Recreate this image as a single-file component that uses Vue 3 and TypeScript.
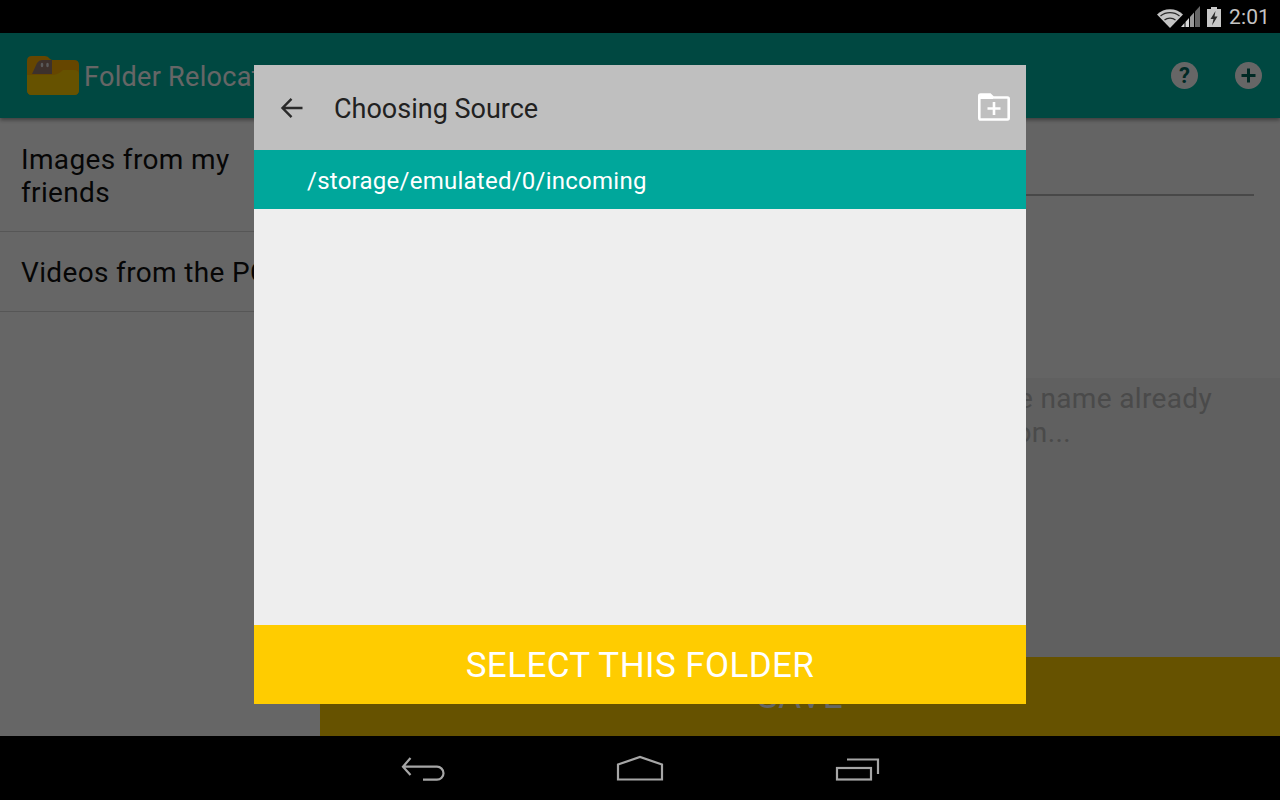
<script setup lang="ts">
const rules = [
  { id: 1, name: 'Images from my friends' },
  { id: 2, name: 'Videos from the PC' },
]
</script>

<template>
  <div class="screen">
    <div class="status">
      <svg class="wifi" width="26" height="22" viewBox="0 0 26 22">
        <path d="M0 7.500 C7 0.500 19 0.500 26 7.500 L13 21 Z" fill="#c4c4c4" />
        <path d="M3.500 9 C9 4.600 17 4.600 22.500 9" fill="none" stroke="#2a2a2a" stroke-width="1.300" />
        <path d="M7.500 13 C10.500 10.500 15.500 10.500 18.500 13" fill="none" stroke="#2a2a2a" stroke-width="1.300" />
      </svg>
      <svg class="signal" width="19" height="22" viewBox="0 0 19 22">
        <path d="M0 21 L3.500 17 V21 Z" fill="#d8d8d8" />
        <path d="M4.500 21 V16 L8 12 V21 Z" fill="#d8d8d8" />
        <path d="M9 21 V11 L13 6.500 V21 Z" fill="#9a9a9a" />
        <path d="M14 21 V5.500 L19 0 V21 Z" fill="#666" />
      </svg>
      <svg class="battery" width="14" height="22" viewBox="0 0 14 22">
        <path d="M4 1 H10 V3 H14 V21 H0 V3 H4 Z" fill="#c8c8c8" />
        <path d="M8.500 5 L3.500 13 H6.500 L5 19.500 L10.500 10.500 H7.500 Z" fill="#2a2a2a" />
      </svg>
      <span class="clock">2:01</span>
    </div>

    <div class="content">
      <header class="appbar">
        <svg class="logo" width="52" height="39" viewBox="0 0 52 39">
          <path d="M5 0 H18 Q21 0 23 3 Q24 4 26 4 H47 Q52 4 52 9 V34 Q52 39 47 39 H5 Q0 39 0 34 V5 Q0 0 5 0 Z" fill="#ffb000" />
          <path d="M0 34 V19 H24 Q32 19 36 14 H47 Q52 14 52 19 V34 Q52 39 47 39 H5 Q0 39 0 34 Z" fill="#ffcc00" />
          <path d="M5 18 L10 7 Q12 4 15 4 H25 V18 Z" fill="#9a7a6e" />
          <ellipse cx="15" cy="9" rx="1.300" ry="2.300" fill="#e0e0e0" />
          <ellipse cx="20.500" cy="9" rx="1.300" ry="2.300" fill="#e0e0e0" />
        </svg>
        <h1 class="app-title">Folder Relocator</h1>
        <div class="actions">
          <span class="round">?</span>
          <span class="round">
            <svg width="27" height="27" viewBox="0 0 27 27">
              <path d="M13.500 6.500 V20.500 M6.500 13.500 H20.500" stroke="#00695c" stroke-width="3" />
            </svg>
          </span>
        </div>
      </header>

      <div class="main">
        <ul class="rules">
          <li v-for="rule in rules" :key="rule.id" class="rule">{{ rule.name }}</li>
        </ul>
        <section class="form">
          <div class="name-field">
            <div class="input-line"></div>
          </div>
          <div class="conflict">
            <p class="hint">Select what should be done when a file with the same name already<br />exists at the destination and choose the desired action...</p>
          </div>
          <button class="save">SAVE</button>
        </section>
      </div>

      <div class="scrim"></div>

      <div class="dialog">
        <div class="dialog-head">
          <svg class="back" width="24" height="24" viewBox="0 0 24 24">
            <path d="M22.500 12 H2.500 M11.500 2.800 L2.500 12 L11.500 21.200" fill="none" stroke="#2a2a2a" stroke-width="2.400" />
          </svg>
          <span class="dialog-title">Choosing Source</span>
          <svg class="new-folder" width="32" height="28" viewBox="0 0 32 28">
            <path d="M2.500 1.500 H12 L15 4.500 H29.500 Q30.700 4.500 30.700 6 V25 Q30.700 26.500 29.500 26.500 H2.500 Q1.300 26.500 1.300 25 V3 Q1.300 1.500 2.500 1.500 Z" fill="none" stroke="#fff" stroke-width="2.600" />
            <path d="M2.500 1.500 H12 L15 4.500 V6 H1.500 Z" fill="#fff" />
            <path d="M16 9 V22 M9.500 15.500 H22.500" stroke="#fff" stroke-width="2.600" />
          </svg>
        </div>
        <div class="path">/storage/emulated/0/incoming</div>
        <div class="folders"></div>
        <button class="select">SELECT THIS FOLDER</button>
      </div>
    </div>

    <nav class="navbar">
      <svg width="46" height="26" viewBox="0 0 46 26">
        <path d="M10.500 3 L3 11.700 L10.500 20 M3 11.700 H37 A6.500 6.500 0 0 1 37 24.700 H23" fill="none" stroke="#a6a6a6" stroke-width="2.200" />
      </svg>
      <svg width="48" height="26" viewBox="0 0 48 26">
        <path d="M2 24.500 V9.500 L24 2 L46 9.500 V24.500 Z" fill="none" stroke="#a6a6a6" stroke-width="2.200" />
      </svg>
      <svg width="46" height="26" viewBox="0 0 46 26">
        <rect x="3" y="13" width="34" height="11.500" fill="none" stroke="#a6a6a6" stroke-width="2.200" />
        <path d="M13 4.500 H44 V19" fill="none" stroke="#a6a6a6" stroke-width="2.200" />
      </svg>
    </nav>
  </div>
</template>

<style>
html,
body {
  margin: 0;
  background: #000;
}
</style>

<style scoped>
.screen {
  width: 1280px;
  height: 800px;
  display: flex;
  flex-direction: column;
  overflow: hidden;
  font-family: Roboto, "Liberation Sans", sans-serif;
}

.status {
  height: 33px;
  flex: none;
  background: #000;
  display: flex;
  align-items: center;
  justify-content: flex-end;
  padding-right: 10px;
  box-sizing: border-box;
}
.wifi {
  margin-right: -2px;
  margin-top: 3px;
}
.signal {
  margin-right: 7px;
  margin-top: 1px;
}
.battery {
  margin-right: 8px;
  margin-top: 1px;
}
.clock {
  color: #c4c4c4;
  font-size: 21px;
  letter-spacing: 0.1px;
  line-height: 33px;
  padding-top: 2px;
}

.content {
  flex: 1;
  position: relative;
  display: flex;
  flex-direction: column;
  min-height: 0;
}

.appbar {
  height: 85px;
  flex: none;
  background: #00b5a3;
  display: flex;
  align-items: center;
  padding-left: 27px;
  box-sizing: border-box;
  box-shadow: 0 2px 4px rgba(0, 0, 0, 0.4);
  position: relative;
  z-index: 1;
}
.app-title {
  margin: 3px 0 0 5px;
  font-size: 27px;
  font-weight: 400;
  letter-spacing: 0.3px;
  color: #fff;
  white-space: nowrap;
}
.actions {
  margin-left: auto;
  display: flex;
  gap: 37px;
  padding-right: 18px;
  margin-top: -1px;
}
.round {
  width: 27px;
  height: 27px;
  border-radius: 50%;
  background: #fff;
  color: #00695c;
  font-size: 22px;
  font-weight: 700;
  line-height: 27px;
  text-align: center;
  display: block;
}
.round svg {
  display: block;
}

.main {
  flex: 1;
  display: flex;
  min-height: 0;
}
.rules {
  width: 320px;
  flex: none;
  margin: 0;
  padding: 0;
  list-style: none;
  background: #ffffff;
}
.rule {
  padding: 25px 90px 22px 21px;
  font-size: 28px;
  letter-spacing: 0.35px;
  line-height: 33px;
  color: #111;
  border-bottom: 1px solid #d8d8d8;
}
.rule:last-child {
  padding-top: 24px;
  white-space: nowrap;
}
.form {
  flex: 1;
  display: flex;
  flex-direction: column;
  background: #fafafa;
}
.name-field {
  height: 260px;
  flex: none;
  box-sizing: border-box;
  padding: 76px 26px 0 30px;
}
.input-line {
  height: 2px;
  background: #b4b4b4;
}
.conflict {
  flex: 1;
  background: #f0f0f0;
  padding: 4px 0 0 30px;
}
.hint {
  margin: 0;
  font-size: 28px;
  letter-spacing: 0.35px;
  line-height: 34px;
  color: #b8b8b8;
  white-space: nowrap;
}
.save {
  height: 79px;
  flex: none;
  border: 0;
  background: #ffcc00;
  color: #fff;
  font: 400 35px Roboto, "Liberation Sans", sans-serif;
  letter-spacing: 0.4px;
  padding: 0;
}

.scrim {
  position: absolute;
  inset: 0;
  z-index: 2;
  background: rgba(0, 0, 0, 0.6);
}

.dialog {
  position: absolute;
  left: 254px;
  top: 32px;
  width: 772px;
  height: 639px;
  z-index: 3;
  display: flex;
  flex-direction: column;
  background: #eeeeee;
}
.dialog-head {
  height: 85px;
  flex: none;
  background: #bfbfbf;
  display: flex;
  align-items: center;
  padding: 0 16px 0 26px;
}
.back {
  flex: none;
}
.dialog-title {
  margin-left: 30px;
  margin-top: 2px;
  font-size: 27px;
  color: #212121;
}
.new-folder {
  margin-left: auto;
  margin-top: -2px;
}
.path {
  height: 59px;
  flex: none;
  background: #00a79b;
  color: #fff;
  font-size: 24px;
  letter-spacing: 0.25px;
  line-height: 62px;
  padding-left: 53px;
}
.folders {
  flex: 1;
}
.select {
  height: 79px;
  flex: none;
  border: 0;
  padding: 2px 0 0;
  background: #ffcc00;
  color: #fff;
  font: 400 35px Roboto, "Liberation Sans", sans-serif;
  letter-spacing: 0.4px;
}

.navbar {
  height: 64px;
  flex: none;
  background: #000;
  display: flex;
  justify-content: center;
  align-items: center;
  gap: 170px;
}
</style>
